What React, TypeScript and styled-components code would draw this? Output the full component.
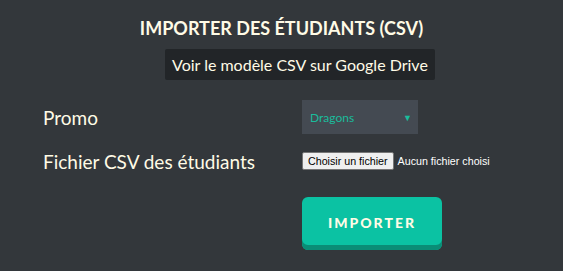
import React from 'react';
import styled, { createGlobalStyle } from 'styled-components';

const GlobalStyle = createGlobalStyle`
  html, body {
    margin: 0;
    padding: 0;
    background: #33373b;
  }
  body {
    font-family: Lato, "Open Sans", sans-serif;
    color: #fffbe6;
  }
`;

const Page = styled.div`
  width: 563px;
  height: 271px;
  box-sizing: border-box;
  padding-top: 16px;
  display: flex;
  flex-direction: column;
`;

const Title = styled.h1`
  margin: 0;
  text-align: center;
  font-size: 18px;
  font-weight: 700;
  letter-spacing: 0;
  line-height: 24px;
  text-transform: uppercase;
`;

const DriveLink = styled.a`
  align-self: flex-start;
  margin: 9px 0 0 165px;
  padding: 0 7px;
  height: 31px;
  display: flex;
  align-items: center;
  background: #222528;
  border-radius: 2px;
  font-size: 16px;
  color: #fffbe6;
  text-decoration: none;
`;

const Form = styled.form`
  margin-top: 20px;
  display: grid;
  grid-template-columns: 259px auto;
  row-gap: 15px;
  padding-left: 43px;
  align-items: center;
`;

const Label = styled.label`
  font-size: 19px;
  line-height: 22px;
  padding-top: 2px;
`;

const SelectWrap = styled.div`
  position: relative;
  width: 116px;
  height: 34px;
`;

const Select = styled.select`
  appearance: none;
  width: 100%;
  height: 100%;
  border: none;
  border-radius: 0;
  background: #444a52;
  color: #1abc9c;
  font-family: Lato, "Open Sans", sans-serif;
  font-size: 12px;
  padding: 0 8px;
  outline: none;
`;

const Arrow = styled.span`
  position: absolute;
  right: 6px;
  top: 50%;
  transform: translateY(-50%);
  color: #1abc9c;
  font-size: 9px;
  pointer-events: none;
`;

const FileRow = styled.div`
  display: flex;
  align-items: center;
  gap: 4px;
  font-family: Arial, "Liberation Sans", sans-serif;
  font-size: 10.7px;
`;

const FileButton = styled.button`
  height: 18px;
  padding: 0 5px;
  background: #efefef;
  border: 1px solid #767676;
  border-radius: 2px;
  color: #000;
  font-family: Arial, "Liberation Sans", sans-serif;
  font-size: 10.7px;
`;

const FileName = styled.span`
  color: #fff;
`;

const Submit = styled.button`
  grid-column: 2;
  margin-top: 9px;
  width: 140px;
  height: 53px;
  border: none;
  border-radius: 6px;
  background: #0bc2a3;
  box-shadow: inset 0 -5px 0 #0a8d76;
  color: #fffbe6;
  font-family: Lato, "Open Sans", sans-serif;
  font-weight: 900;
  font-size: 14px;
  letter-spacing: 2px;
  padding-bottom: 4px;
`;

export default function App() {
  return (
    <>
      <GlobalStyle />
      <Page>
        <Title>Importer des étudiants (CSV)</Title>
        <DriveLink href="#">Voir le modèle CSV sur Google Drive</DriveLink>
        <Form onSubmit={(e) => e.preventDefault()}>
          <Label>Promo</Label>
          <SelectWrap>
            <Select defaultValue="dragons">
              <option value="dragons">Dragons</option>
            </Select>
            <Arrow>▼</Arrow>
          </SelectWrap>
          <Label>Fichier CSV des étudiants</Label>
          <FileRow>
            <FileButton type="button">Choisir un fichier</FileButton>
            <FileName>Aucun fichier choisi</FileName>
          </FileRow>
          <Submit type="submit">IMPORTER</Submit>
        </Form>
      </Page>
    </>
  );
}
